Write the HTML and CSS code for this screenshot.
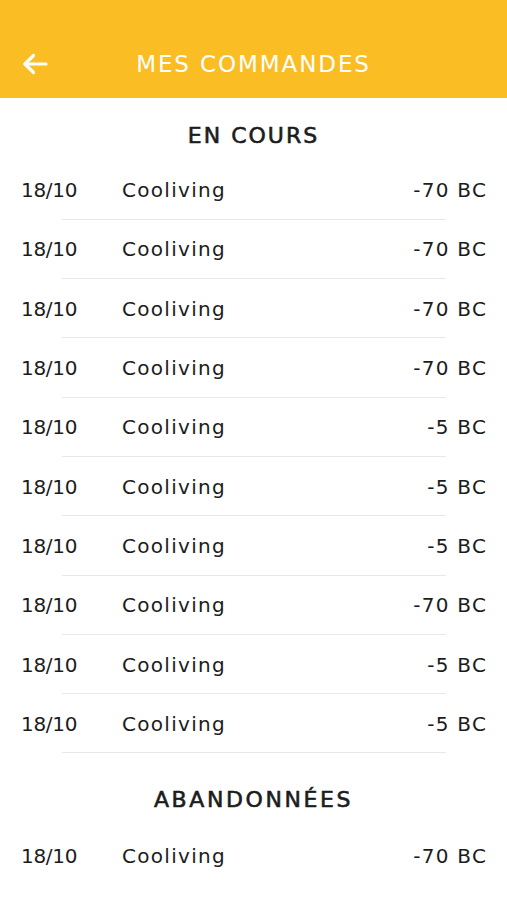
FILE: index.html
```html
<!DOCTYPE html>
<html lang="fr">
<head>
<meta charset="utf-8">
<title>Mes commandes</title>
<link rel="stylesheet" href="styles.css">
</head>
<body>
<header class="topbar">
  <button class="back" aria-label="Retour">
    <svg width="26" height="22" viewBox="0 0 26 22" fill="none" stroke="#fff" stroke-width="3.2" stroke-linecap="round" stroke-linejoin="round"><path d="M24 11H3"/><path d="M11.5 2.5L3 11l8.5 8.5"/></svg>
  </button>
  <h1 class="title">MES COMMANDES</h1>
</header>
<main>
  <section class="section">
    <h2 class="section-title">EN COURS</h2>
    <ul class="list">
      <li class="row"><span class="date">18/10</span><span class="name">Cooliving</span><span class="amount">-70 BC</span></li>
      <li class="row"><span class="date">18/10</span><span class="name">Cooliving</span><span class="amount">-70 BC</span></li>
      <li class="row"><span class="date">18/10</span><span class="name">Cooliving</span><span class="amount">-70 BC</span></li>
      <li class="row"><span class="date">18/10</span><span class="name">Cooliving</span><span class="amount">-70 BC</span></li>
      <li class="row"><span class="date">18/10</span><span class="name">Cooliving</span><span class="amount">-5 BC</span></li>
      <li class="row"><span class="date">18/10</span><span class="name">Cooliving</span><span class="amount">-5 BC</span></li>
      <li class="row"><span class="date">18/10</span><span class="name">Cooliving</span><span class="amount">-5 BC</span></li>
      <li class="row"><span class="date">18/10</span><span class="name">Cooliving</span><span class="amount">-70 BC</span></li>
      <li class="row"><span class="date">18/10</span><span class="name">Cooliving</span><span class="amount">-5 BC</span></li>
      <li class="row"><span class="date">18/10</span><span class="name">Cooliving</span><span class="amount">-5 BC</span></li>
    </ul>
  </section>
  <section class="section">
    <h2 class="section-title">ABANDONNÉES</h2>
    <ul class="list">
      <li class="row"><span class="date">18/10</span><span class="name">Cooliving</span><span class="amount">-70 BC</span></li>
    </ul>
  </section>
</main>
</body>
</html>
```
FILE: styles.css
```css
* { box-sizing: border-box; }
html, body { margin: 0; padding: 0; }
body {
  font-family: "DejaVu Sans", "Open Sans", sans-serif;
  color: #1c1c1c;
  background: #fff;
  width: 507px;
}
.topbar {
  height: 98px;
  background: #fbbd24;
  display: flex;
  align-items: center;
  padding-top: 30px;
  position: relative;
}
.back {
  position: absolute;
  left: 22px;
  top: 53px;
  background: none;
  border: 0;
  padding: 0;
  width: 26px;
  height: 22px;
  display: flex;
}
.title {
  flex: 1;
  margin: 0;
  text-align: center;
  color: #fff;
  font-weight: 400;
  font-size: 23px;
  letter-spacing: 1.9px;
}
.section-title {
  margin: 0;
  height: 62.5px;
  display: flex;
  align-items: center;
  justify-content: center;
  padding-top: 12px;
  font-size: 22px;
  font-weight: 400;
  letter-spacing: 2px;
  -webkit-text-stroke: 0.6px currentColor;
}
.section + .section .section-title {
  padding-top: 20px;
  height: 73px;
  letter-spacing: 2.6px;
}
.list { list-style: none; margin: 0; padding: 0; }
.row {
  height: 59.3px;
  display: flex;
  align-items: center;
  padding: 0 21px;
  font-size: 20px;
  letter-spacing: 1.3px;
  position: relative;
}
.row::after {
  content: "";
  position: absolute;
  left: 62px;
  right: 61px;
  bottom: 0;
  height: 1px;
  background: #e8e8e8;
}
.section:last-child .row::after { display: none; }
.date { width: 101px; letter-spacing: -0.3px; }
.name { flex: 1; }
.amount { text-align: right; margin-right: -1.3px; }
```
